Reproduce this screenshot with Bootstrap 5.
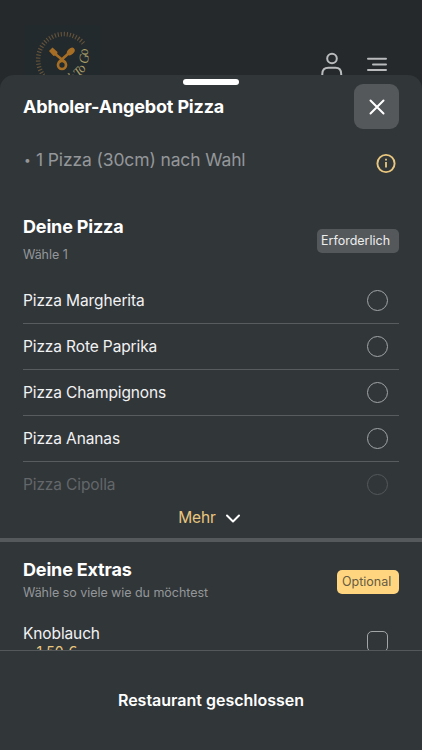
<!DOCTYPE html>
<html lang="de">
<head>
<meta charset="utf-8">
<meta name="viewport" content="width=device-width, initial-scale=1">
<title>Abholer-Angebot Pizza</title>
<link href="https://cdn.jsdelivr.net/npm/bootstrap@5.3.0/dist/css/bootstrap.min.css" rel="stylesheet">
<style>
body{height:750px;background:#25292c;color:#f1f2f3;font-family:Inter,"Liberation Sans",sans-serif;font-size:15.5px;letter-spacing:-.12px;line-height:20px}
svg{display:block;flex:none}
.page-top{height:75px;padding:24px 35px 0 24px}
.account-icon{margin:28px 24px 0 0}
.menu-icon{margin-top:32px}
.sheet{background:#313639;border-radius:14px 14px 0 0;min-height:0}
.grip{width:56px;height:6px;margin-top:4px;border-radius:3px;background:#fff}
.sheet-head{height:64px;padding:0 23px}
.sheet-head .grip-line{height:9px}
.sheet-title{font-size:18px;line-height:24px;font-weight:700;letter-spacing:-.17px;color:#fff}
.close-btn{width:45px;height:45px;border-radius:9px;background:#54585b}
.sheet-body{padding-top:9px;min-height:0}
.side{padding-left:23px;padding-right:23px}
.offer{height:26px;font-size:17.5px;letter-spacing:-.13px;line-height:24px;color:#94979a}
.dot{width:13px;padding-left:1px;font-size:12px}
.muted-note{font-size:12.5px;letter-spacing:-.04px;line-height:18px;color:#94979a}
.tag{width:82px;height:24px;border-radius:5px;background:#54585b;color:#eceded;font-size:12.5px;letter-spacing:0;line-height:24px;padding-left:4px}
.tag-gold{width:62px;background:#ffd57f;color:#665b43;padding-left:5px}
.first-group{padding-top:38px}
.group-head{height:54px;margin-bottom:12px}
.group-head .tag{margin-top:3px}
.pizza-note{margin-top:7px}
.choice{height:46px;padding-right:11px;border-bottom:1px solid #585c5e}
.choice.faded{height:45px;border:0;color:#63676a}
.ring{width:21px;height:21px;border:1px solid #a2a5a6;border-radius:50%}
.faded .ring{border-color:#54585b}
.gold{color:#e9c77f}
.more{height:20px;gap:9px;margin:1px 3px 10px 0}
.divider{height:4px;background:#56595c}
.extras{padding-top:16px}
.extras-note{margin-top:2px}
.extras .tag{margin-top:3px}
.extra-row{padding:22px 11px 0 0}
.box{width:21px;height:21px;margin-top:7px;border:1px solid #a2a5a6;border-radius:5px}
.price{font-size:14px;letter-spacing:.1px;line-height:15px}
.sheet-foot{height:100px;padding-bottom:2px;border-top:1px solid #54585b;font-size:16px;letter-spacing:0;font-weight:600;color:#fff}
</style>
<script src="https://cdn.jsdelivr.net/npm/bootstrap@5.3.0/dist/js/bootstrap.bundle.min.js"></script>
</head>
<body class="d-flex flex-column overflow-hidden m-0">
<header class="page-top d-flex align-items-start overflow-hidden flex-shrink-0">
  <svg width="78" height="66" viewBox="24 24 78 66" role="img" aria-label="Logo">
    <rect x="24" y="25" width="77" height="66" fill="#222a2d"/>
    <path d="M43.500 75.500A25 25 0 1 1 84 44" fill="none" stroke="#65533a" stroke-width="4.500" stroke-dasharray="1.100 1.900"/>
    <g fill="none" stroke="#a66d25" stroke-width="2.600" stroke-linecap="round">
      <path d="M54 53L65 62M69 53L59 62"/><circle cx="62" cy="65" r="4" stroke-width="2.700"/>
    </g>
    <ellipse cx="70.800" cy="51.500" rx="4.500" ry="3" transform="rotate(-43 70.800 51.500)" fill="#a66d25"/>
    <path d="M49 51L52.500 47.500L57.500 52L57 55L53.500 56Z" fill="#a66d25"/>
    <path id="ring-text" d="M34.500 57A27 27 0 0 0 88.500 57A27 27 0 0 0 61.500 30" fill="none"/>
    <text font-family="Liberation Serif, serif" font-style="italic" font-size="13.500" letter-spacing=".1" fill="#a89c68" text-anchor="end"><textPath href="#ring-text" startOffset="94">k To Go</textPath></text>
  </svg>
  <svg class="account-icon ms-auto" width="22" height="25" viewBox="0 0 22 25" fill="none" stroke="#b9bbbc" stroke-width="2"><circle cx="11" cy="6.500" r="4.800"/><path d="M1.300 26V22Q1.300 15.700 7.500 15.700H14.500Q20.200 15.700 20.200 22V26"/></svg>
  <svg class="menu-icon" width="20" height="17" viewBox="0 0 20 17" fill="none" stroke="#b9bbbc" stroke-width="2" stroke-linecap="round"><path d="M1 2.700H19M6 8.400H19M1 14H19"/></svg>
</header>
<main class="sheet d-flex flex-column flex-grow-1">
  <div class="sheet-head flex-shrink-0">
    <div class="grip-line d-flex justify-content-center"><div class="grip"></div></div>
    <div class="d-flex align-items-center justify-content-between">
      <h1 class="sheet-title m-0">Abholer-Angebot Pizza</h1>
      <button class="close-btn btn p-0 border-0 d-flex align-items-center justify-content-center" aria-label="Schließen"><svg width="16" height="16" viewBox="0 0 16 16" stroke="#fff" stroke-width="2" stroke-linecap="round"><path d="M1.500 1.500L14.500 14.500M14.500 1.500L1.500 14.500"/></svg></button>
    </div>
  </div>
  <div class="sheet-body flex-grow-1 overflow-hidden">
    <div class="offer side d-flex">
      <span class="dot">•</span><span>1 Pizza (30cm) nach Wahl</span>
      <svg class="mt-1 ms-auto" width="24" height="22" viewBox="0 -1 24 22" fill="none" stroke="#e9c77f" stroke-width="1.900"><circle cx="11" cy="10.500" r="8.600"/><path d="M11 9V14.500M11 5.800V7.500" stroke-width="1.800"/></svg>
    </div>
    <section class="first-group side">
      <div class="group-head d-flex justify-content-between align-items-center">
        <div><h2 class="sheet-title m-0">Deine Pizza</h2><div class="muted-note pizza-note">Wähle 1</div></div>
        <span class="tag">Erforderlich</span>
      </div>
      <div class="choice d-flex align-items-center justify-content-between"><span>Pizza Margherita</span><span class="ring"></span></div>
      <div class="choice d-flex align-items-center justify-content-between"><span>Pizza Rote Paprika</span><span class="ring"></span></div>
      <div class="choice d-flex align-items-center justify-content-between"><span>Pizza Champignons</span><span class="ring"></span></div>
      <div class="choice d-flex align-items-center justify-content-between"><span>Pizza Ananas</span><span class="ring"></span></div>
      <div class="choice faded d-flex align-items-center justify-content-between"><span>Pizza Cipolla</span><span class="ring"></span></div>
      <div class="more d-flex align-items-center justify-content-center"><span class="gold">Mehr</span><svg width="16" height="10" viewBox="0 0 16 10" fill="none" stroke="#fff" stroke-width="2" stroke-linecap="round" stroke-linejoin="round"><path d="M2 2.500L8 8.500L14 2.500"/></svg></div>
    </section>
    <div class="divider"></div>
    <section class="extras side">
      <div class="d-flex justify-content-between align-items-center">
        <div><h2 class="sheet-title m-0">Deine Extras</h2><div class="muted-note extras-note">Wähle so viele wie du möchtest</div></div>
        <span class="tag tag-gold">Optional</span>
      </div>
      <div class="extra-row d-flex justify-content-between"><div>Knoblauch<div class="gold price">+ 1,50 €</div></div><span class="box"></span></div>
    </section>
  </div>
  <footer class="sheet-foot d-flex align-items-center justify-content-center flex-shrink-0">Restaurant geschlossen</footer>
</main>
</body>
</html>
